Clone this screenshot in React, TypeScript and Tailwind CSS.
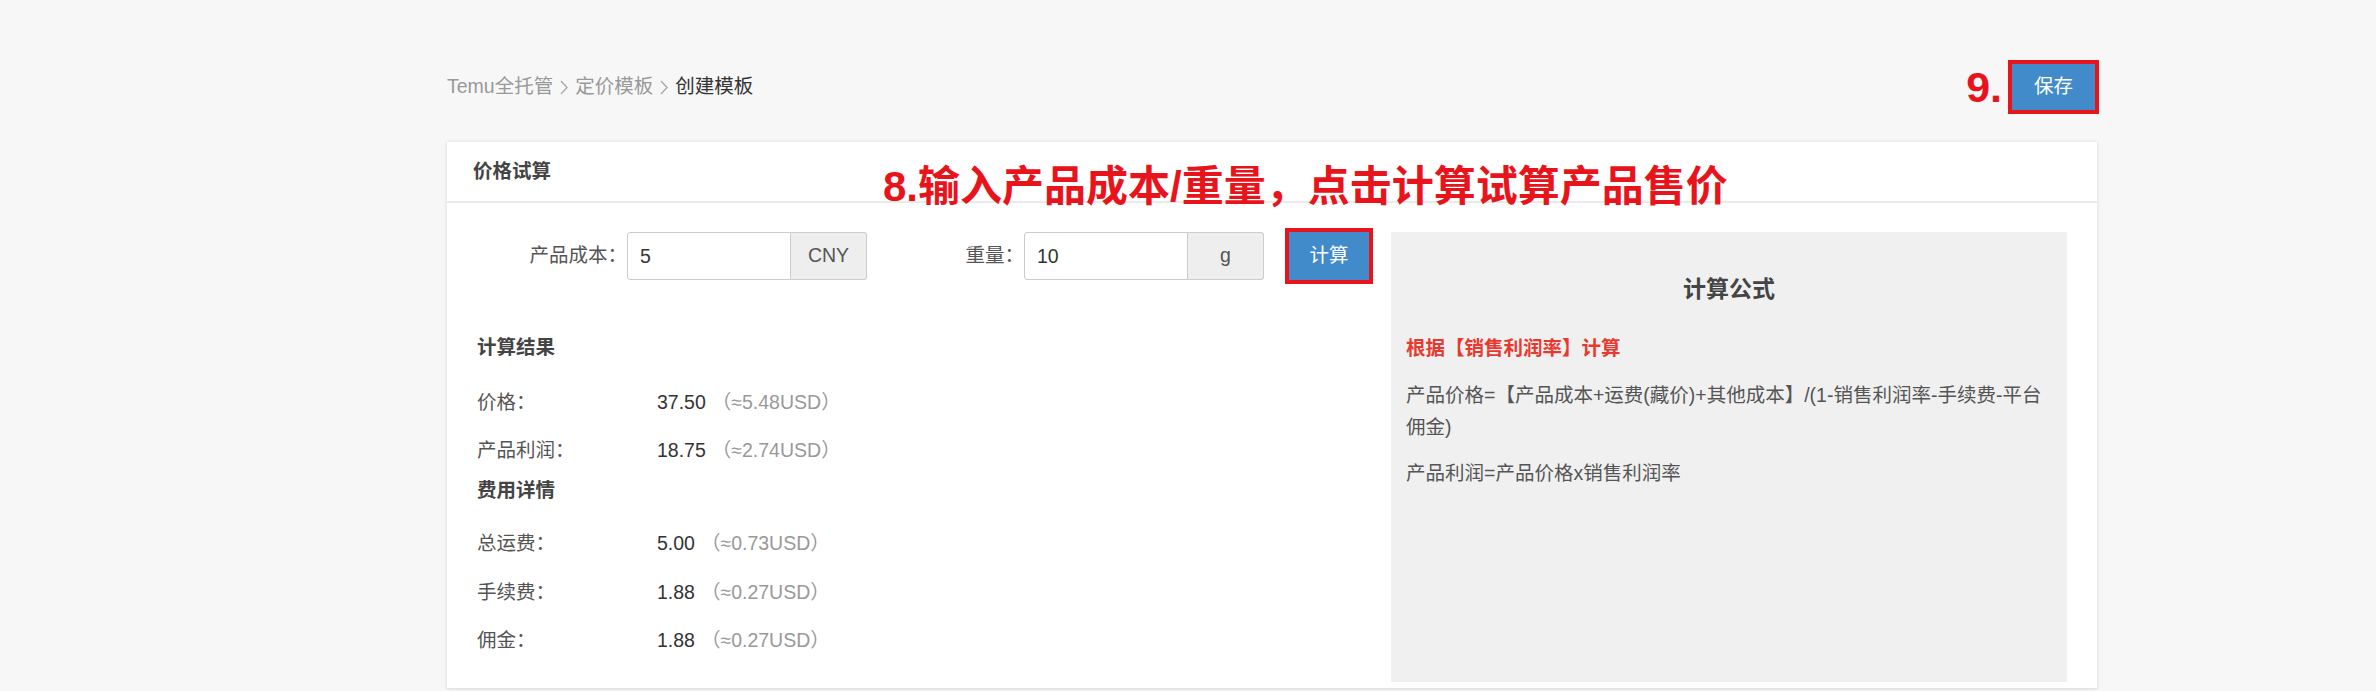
import React from 'react';

const results = [
  { label: '价格：', value: '37.50', usd: '5.48', top: 'mt-[27px]' },
  { label: '产品利润：', value: '18.75', usd: '2.74', top: 'mt-[20px]' },
];

const fees = [
  { label: '总运费：', value: '5.00', usd: '0.73', top: 'mt-[25px]' },
  { label: '手续费：', value: '1.88', usd: '0.27', top: 'mt-[21px]' },
  { label: '佣金：', value: '1.88', usd: '0.27', top: 'mt-[20px]' },
];

function Chevron() {
  return (
    <svg width="8" height="15" viewBox="0 0 8 15" className="mx-[7px] shrink-0">
      <polyline points="1,1 7,7.5 1,14" fill="none" stroke="#a8a8a8" strokeWidth="1.3" />
    </svg>
  );
}

function Row({ label, value, usd, top }: { label: string; value: string; usd: string; top: string }) {
  return (
    <div className={`${top} flex h-[28px] items-center leading-[28px]`}>
      <span className="w-[180px] text-[#555]">{label}</span>
      <span className="text-[#333]">{value}</span>
      <span className="ml-[6px] text-[#999]">（≈{usd}USD）</span>
    </div>
  );
}

function InputGroup({ value, unit }: { value: string; unit: string }) {
  return (
    <div className="flex h-[48px] w-[240px]">
      <input
        defaultValue={value}
        readOnly
        className="h-full w-[164px] rounded-l-[3px] border border-[#ccc] bg-white px-[12px] text-[#333] outline-none"
      />
      <div className="flex h-full flex-1 items-center justify-center rounded-r-[3px] border border-l-0 border-[#ccc] bg-[#eee] text-[#555]">
        {unit}
      </div>
    </div>
  );
}

export default function App() {
  return (
    <div className="relative h-[691px] overflow-hidden bg-[#f7f7f7] font-['Liberation_Sans','Noto_Sans_CJK_SC',sans-serif] text-[19.5px] text-[#555]">
      <div className="ml-[447px] w-[1650px] pt-[60px]">
        {/* breadcrumb + save */}
        <div className="flex h-[54px] items-center justify-between">
          <div className="flex items-center">
            <span className="text-[#999]">Temu全托管</span>
            <Chevron />
            <span className="text-[#999]">定价模板</span>
            <Chevron />
            <span className="text-[#333]">创建模板</span>
          </div>
          <div className="-mr-[2px] flex items-center gap-[6px]">
            <span className="text-[43px] font-bold leading-none text-[#e8141c]">9.</span>
            <div className="border-[4px] border-[#e8141c]">
              <button className="block h-[46px] w-[83px] bg-[#428bca] text-white">保存</button>
            </div>
          </div>
        </div>

        {/* card */}
        <div className="mt-[28px] h-[547px] border-b border-[#e3e3e3] bg-white shadow-[0_0_4px_rgba(0,0,0,0.12)]">
          <div className="flex h-[61px] items-center border-b-[2px] border-[#ebebeb] pl-[26px] font-bold text-[#444]">
            价格试算
          </div>
          <div className="flex px-[30px] pt-[29px]">
            <div className="flex-1">
              <div className="flex h-[48px] items-center">
                <span className="w-[150px] text-right">产品成本：</span>
                <InputGroup value="5" unit="CNY" />
                <span className="w-[157px] text-right">重量：</span>
                <InputGroup value="10" unit="g" />
                <div className="ml-[21px] border-[4px] border-[#e8141c]">
                  <button className="block h-[48px] w-[80px] bg-[#428bca] text-white">计算</button>
                </div>
              </div>

              <div className="mt-[53px] h-[28px] font-bold leading-[28px] text-[#444]">计算结果</div>
              {results.map((r) => (
                <Row key={r.label} {...r} />
              ))}
              <div className="mt-[12px] h-[28px] font-bold leading-[28px] text-[#444]">费用详情</div>
              {fees.map((r) => (
                <Row key={r.label} {...r} />
              ))}
            </div>

            <div className="h-[450px] w-[676px] bg-[#f0f0f0] px-[15px] pt-[41px]">
              <div className="text-center text-[23px] font-bold leading-[32px] text-[#444]">计算公式</div>
              <div className="mt-[29px] font-bold leading-[28px] text-[#e8392f]">根据【销售利润率】计算</div>
              <div className="mt-[17px] leading-[32px]">
                产品价格=【产品成本+运费(藏价)+其他成本】/(1-销售利润率-手续费-平台佣金)
              </div>
              <div className="mt-[14px] leading-[32px]">产品利润=产品价格x销售利润率</div>
            </div>
          </div>
        </div>
      </div>

      {/* annotation overlay */}
      <div className="absolute left-[883px] top-[166px] whitespace-nowrap text-[42px] font-bold leading-none text-[#e8141c]">
        8.输入产品成本/重量，点击计算试算产品售价
      </div>
    </div>
  );
}
